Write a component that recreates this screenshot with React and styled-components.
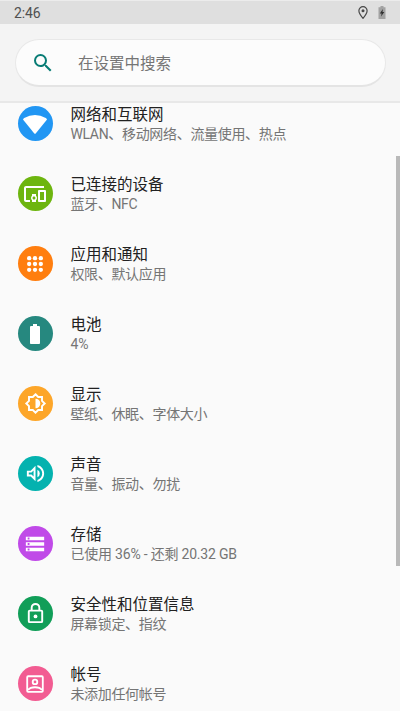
import React from "react";
import styled, { createGlobalStyle } from "styled-components";
import { MdSearch, MdDevicesOther, MdStorage } from "react-icons/md";

const WifiIcon = () => (
  <svg viewBox="0 0 24 24" fill="currentColor">
    <path d="M0 7.600Q.3 6.600 1.200 6Q12 0 22.800 6Q23.700 6.600 24 7.600L12.700 21.400Q12 22.100 11.300 21.400Z" />
  </svg>
);

const AppsIcon = () => (
  <svg viewBox="0 0 24 24" fill="currentColor">
    {[5, 12, 19].map((y) =>
      [5, 12, 19].map((x) => <circle key={`${x}-${y}`} cx={x} cy={y} r="2.6" />)
    )}
  </svg>
);

const BatteryIcon = () => (
  <svg viewBox="0 0 24 24" fill="currentColor">
    <path d="M16 4H14V2h-4v2H8C7.400 4 7 4.600 7 5.300v15.400c0 .7.400 1.300 1 1.300h8c.6 0 1-.6 1-1.300V5.300c0-.7-.4-1.300-1-1.300z" />
  </svg>
);

const DisplayIcon = () => (
  <svg viewBox="0 0 24 24" fill="none" stroke="currentColor" strokeWidth="2">
    <path d="M12 2.400l2.800 2.800h4v4L21.600 12l-2.800 2.800v4h-4L12 21.600l-2.800-2.800h-4v-4L2.400 12l2.800-2.800v-4h4z" />
    <path d="M12 7a5 5 0 0 1 0 10z" fill="currentColor" stroke="none" />
  </svg>
);

const SoundIcon = () => (
  <svg viewBox="0 0 24 24" fill="currentColor">
    <path d="M3 9v6h4l5 5V4L7 9H3zm7-.17v6.340L7.830 13H5v-2h2.830L10 8.830zM16.500 12A4.500 4.500 0 0 0 14 7.970v8.050A4.470 4.470 0 0 0 16.500 12zM14 3.230v2.060c2.890.86 5 3.540 5 6.710s-2.110 5.850-5 6.710v2.060c4.010-.91 7-4.490 7-8.770s-2.990-7.860-7-8.770z" />
  </svg>
);

const LockIcon = () => (
  <svg viewBox="0 0 24 24" fill="none" stroke="currentColor" strokeWidth="2">
    <rect x="5" y="9" width="14" height="12" rx="1" />
    <path d="M8 9V6a4 4 0 0 1 8 0v3" />
    <circle cx="12" cy="15" r="2" fill="currentColor" stroke="none" />
  </svg>
);

const AccountIcon = () => (
  <svg viewBox="0 0 24 24" fill="none" stroke="currentColor" strokeWidth="2">
    <rect x="3.500" y="3.500" width="17" height="17" rx="1" />
    <circle cx="12" cy="9.700" r="2.500" />
    <path d="M4.500 18.500c3-4 12-4 15 0" />
  </svg>
);

const items = [
  { title: "网络和互联网", text: "WLAN、移动网络、流量使用、热点", color: "#2196f3", icon: WifiIcon, size: 24 },
  { title: "已连接的设备", text: "蓝牙、NFC", color: "#6db50f", icon: MdDevicesOther, size: 24 },
  { title: "应用和通知", text: "权限、默认应用", color: "#ff7e0f", icon: AppsIcon, size: 20 },
  { title: "电池", text: "4%", color: "#26887f", icon: BatteryIcon, size: 24, spacing: -0.1 },
  { title: "显示", text: "壁纸、休眠、字体大小", color: "#fda629", icon: DisplayIcon, size: 23 },
  { title: "声音", text: "音量、振动、勿扰", color: "#04b2af", icon: SoundIcon, size: 23 },
  { title: "存储", text: "已使用 36% - 还剩 20.32 GB", color: "#c04ae8", icon: MdStorage, size: 22, spacing: -0.2 },
  { title: "安全性和位置信息", text: "屏幕锁定、指纹", color: "#119e58", icon: LockIcon, size: 23 },
  { title: "帐号", text: "未添加任何帐号", color: "#f25c92", icon: AccountIcon, size: 22 },
];

export default function App() {
  return (
    <Screen>
      <GlobalStyle />
      <StatusBar>
        <Time>2:46</Time>
        <StatusIcons>
          <svg width="10" height="13" viewBox="0 0 10 13">
            <path d="M5 .7A4.100 4.100 0 0 0 .9 4.800C.9 7.700 5 12.300 5 12.300S9.100 7.700 9.100 4.800A4.100 4.100 0 0 0 5 .7z" fill="none" stroke="#484848" strokeWidth="1.200" />
            <circle cx="5" cy="4.800" r="1.500" fill="#484848" />
          </svg>
          <svg width="8" height="13" viewBox="0 0 8 13">
            <path d="M2.500 0h3v1.200H7.500V13H.5V1.200h2z" fill="#a2a2a2" />
            <path d="M4.900 2.900L1.800 7.400h1.800L3 10.600l3.300-4.500H4.500z" fill="#303030" />
          </svg>
        </StatusIcons>
      </StatusBar>

      <Header>
        <SearchBox>
          <MdSearch size={24} color="#087c75" />
          <SearchHint>在设置中搜索</SearchHint>
        </SearchBox>
      </Header>

      <Content>
        <List>
          {items.map(({ title, text, color, icon: Icon, size, spacing = -0.32 }) => (
            <Row key={title}>
              <Circle $color={color} $size={size}>
                <Icon />
              </Circle>
              <Info>
                <Title>{title}</Title>
                <Text $spacing={spacing}>{text}</Text>
              </Info>
            </Row>
          ))}
        </List>
        <Scrollbar />
      </Content>
    </Screen>
  );
}

const GlobalStyle = createGlobalStyle`
  * {
    box-sizing: border-box;
  }

  body {
    margin: 0;
    background: #fafafa;
    font-family: Roboto, "Noto Sans CJK SC", sans-serif;
  }
`;

const Screen = styled.div`
  display: flex;
  flex-direction: column;
  width: 400px;
  height: 711px;
  overflow: hidden;
  background: #fafafa;
`;

const StatusBar = styled.div`
  display: flex;
  flex: none;
  align-items: center;
  justify-content: space-between;
  height: 24px;
  padding: 0 14px;
  border-top: 1px solid #ececec;
  background: #dfdfdf;
`;

const Time = styled.span`
  color: #505050;
  font-size: 14px;
  letter-spacing: -0.1px;
  line-height: 20px;
`;

const StatusIcons = styled.div`
  display: flex;
  align-items: center;
  gap: 10px;
`;

const Header = styled.div`
  flex: none;
  height: 79px;
  padding: 15px 14px 0 15px;
  border-bottom: 2px solid #e8e8e8;
  background: #f4f4f4;
`;

const SearchBox = styled.div`
  display: flex;
  align-items: center;
  gap: 23px;
  height: 48px;
  padding-left: 15px;
  border: 1px solid #e8e8e8;
  border-bottom: 2px solid #e4e4e4;
  border-radius: 24px;
  background: #fcfcfc;
`;

const SearchHint = styled.span`
  padding-bottom: 2px;
  color: #757575;
  font-size: 15.500px;
`;

const Content = styled.div`
  display: flex;
  flex: 1;
  min-height: 0;
  justify-content: space-between;
`;

const List = styled.div`
  padding-left: 17.700px;
`;

const Row = styled.div`
  display: flex;
  align-items: flex-start;
  gap: 17.700px;
  height: 70px;
  padding-top: 3px;
`;

const Circle = styled.div`
  display: flex;
  flex: none;
  align-items: center;
  justify-content: center;
  width: 35px;
  height: 35px;
  border-radius: 50%;
  background: ${({ $color }) => $color};
  color: #fff;

  svg {
    flex: none;
    width: ${({ $size }) => $size}px;
    height: ${({ $size }) => $size}px;
  }
`;

const Info = styled.div`
  margin-top: -1px;
  white-space: nowrap;
`;

const Title = styled.div`
  color: #212121;
  font-size: 15.500px;
  line-height: 20px;
`;

const Text = styled.div`
  color: #757575;
  font-size: 14px;
  letter-spacing: ${({ $spacing }) => $spacing}px;
  line-height: 18px;
`;

const Scrollbar = styled.div`
  width: 4px;
  height: 410px;
  margin-top: 53px;
  background: #b9b9b9;
`;
